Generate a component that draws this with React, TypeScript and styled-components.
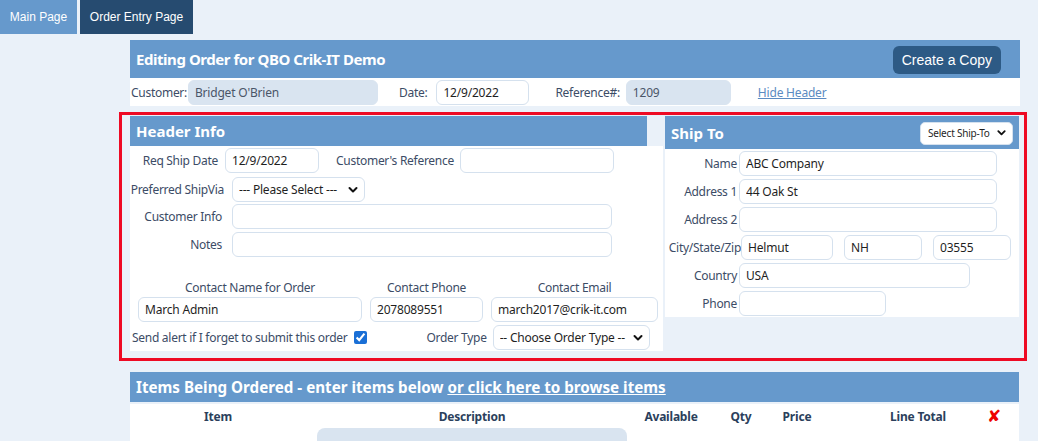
import React from 'react'
import styled, { createGlobalStyle } from 'styled-components'

const GlobalStyle = createGlobalStyle`
  html, body {
    margin: 0;
    padding: 0;
    background: #eaf1f9;
    font-family: 'Noto Sans', 'Open Sans', sans-serif;
    overflow: hidden;
  }
`

const Tabs = styled.div`
  display: flex;
  gap: 3px;
  height: 34px;
`

const Tab = styled.div<{ $active?: boolean }>`
  display: flex;
  align-items: center;
  justify-content: center;
  width: ${({ $active }) => ($active ? '113px' : '77px')};
  background: ${({ $active }) => ($active ? '#264b70' : '#6699cc')};
  color: #fff;
  font-family: 'Liberation Sans', Arial, sans-serif;
  font-size: 12px;
`

const Main = styled.div`
  margin: 6px 0 0 130px;
  width: 890px;
`

const TitleBar = styled.div`
  display: flex;
  align-items: center;
  justify-content: space-between;
  height: 38px;
  padding: 0 19px 0 6px;
  background: #6699cc;
`

const Title = styled.div`
  color: #fff;
  font-weight: 700;
  font-size: 15px;
  letter-spacing: -0.45px;
`

const CopyButton = styled.button`
  height: 28px;
  padding: 0 9px;
  border: none;
  border-radius: 6px;
  background: #2d5a85;
  color: #fff;
  font-family: 'Liberation Sans', Arial, sans-serif;
  font-size: 14px;
  margin-top: 1px;
`

const InfoRow = styled.div`
  display: flex;
  align-items: center;
  height: 28px;
  background: #fff;
  padding-left: 1px;
`

const Label = styled.span<{ $ml?: number; $mr?: number }>`
  color: #3c4c66;
  font-size: 12px;
  letter-spacing: -0.28px;
  margin-left: ${({ $ml }) => $ml ?? 0}px;
  margin-right: ${({ $mr }) => $mr ?? 0}px;
  white-space: nowrap;
`

const Field = styled.input<{ $w: number; $gray?: boolean }>`
  box-sizing: border-box;
  width: ${({ $w }) => $w}px;
  height: 25px;
  padding: 0 6px;
  border: 1px solid ${({ $gray }) => ($gray ? '#d9e4f0' : '#d5e1ee')};
  border-radius: 6px;
  background: ${({ $gray }) => ($gray ? '#d9e4f0' : '#fff')};
  color: ${({ $gray }) => ($gray ? '#4a5568' : '#1f1f1f')};
  font-family: 'Noto Sans', sans-serif;
  font-size: 12px;
  letter-spacing: -0.2px;
  outline: none;
`

const HideLink = styled.a`
  margin-left: 27px;
  color: #5b8bc2;
  font-size: 12px;
  letter-spacing: -0.2px;
  text-decoration: underline;
`

const Highlight = styled.div`
  display: flex;
  gap: 2px;
  margin: 6px -7px 0 -11px;
  padding: 1px 5px 7px 8px;
  border: 3px solid #ee0a24;
`

const HeaderInfo = styled.div`
  width: 533px;
  display: flex;
  flex-direction: column;
`

const SectionBar = styled.div<{ $w?: number; $h: number }>`
  display: flex;
  align-items: center;
  justify-content: space-between;
  box-sizing: border-box;
  width: ${({ $w }) => ($w ? `${$w}px` : 'auto')};
  height: ${({ $h }) => $h}px;
  padding: 0 6px;
  background: #6699cc;
  color: #fff;
  font-weight: 700;
  font-size: 15px;
`

const Body = styled.div`
  display: flex;
  flex-direction: column;
  background: #fff;
`

const FormRow = styled.div<{ $mt?: number }>`
  display: flex;
  align-items: center;
  margin-top: ${({ $mt }) => $mt ?? 3}px;
`

const RowLabel = styled(Label)<{ $w: number }>`
  box-sizing: border-box;
  width: ${({ $w }) => $w}px;
  text-align: right;
  flex-shrink: 0;
`

const Contacts = styled.div`
  display: flex;
  gap: 8px;
  padding-left: 8px;
  margin-top: 22px;
`

const ContactCol = styled.div`
  display: flex;
  flex-direction: column;
  align-items: center;
  gap: 1px;
`

const SelectWrap = styled.div<{ $w: number; $h?: number }>`
  position: relative;
  width: ${({ $w }) => $w}px;
  height: ${({ $h }) => $h ?? 25}px;
  flex-shrink: 0;
`

const NativeSelect = styled.select<{ $small?: boolean }>`
  appearance: none;
  box-sizing: border-box;
  width: 100%;
  height: 100%;
  padding: 0 0 0 ${({ $small }) => ($small ? 7 : 6)}px;
  border: 1px solid #d5e1ee;
  border-radius: ${({ $small }) => ($small ? 5 : 6)}px;
  background: #fff;
  color: #1f1f1f;
  font-family: 'Noto Sans', sans-serif;
  font-size: ${({ $small }) => ($small ? 10 : 12)}px;
  letter-spacing: -0.2px;
  outline: none;
`

const Chevron = styled.svg`
  position: absolute;
  right: 6px;
  top: 50%;
  transform: translateY(-50%);
  pointer-events: none;
`

const Check = styled.input`
  width: 13px;
  height: 13px;
  margin: 0 0 0 7px;
  accent-color: #1a6fd6;
`

const ShipTo = styled.div`
  width: 354px;
  display: flex;
  flex-direction: column;
  align-self: flex-start;
`

const ShipBody = styled(Body)`
  padding-bottom: 1px;
`

const Items = styled.div`
  margin-top: 11px;
  width: 889px;
`

const ItemsBar = styled(SectionBar)`
  font-size: 15.2px;
`

const BrowseLink = styled.span`
  text-decoration: underline;
`

const ItemsBody = styled.div`
  background: #fff;
  margin-top: 2px;
  height: 40px;
`

const ColHeads = styled.div`
  display: grid;
  grid-template-columns: 176px 332px 66px 74px 38px 164px 28px;
  align-items: center;
  height: 24px;
`

const ColHead = styled.div<{ $pl?: number }>`
  text-align: center;
  padding-left: ${({ $pl }) => $pl ?? 0}px;
  color: #2b3f5c;
  font-weight: 700;
  font-size: 12px;
  letter-spacing: -0.2px;
`

const RemoveAll = styled.div`
  text-align: center;
  color: #ee0000;
  font-family: 'DejaVu Sans', sans-serif;
  font-size: 17px;
  font-weight: 700;
  line-height: 1;
`

const DescBox = styled.div`
  margin-left: 187px;
  width: 310px;
  height: 30px;
  border-radius: 8px;
  background: #d9e4f0;
`

function Select({ w, h, small, text }: { w: number; h?: number; small?: boolean; text: string }) {
  return (
    <SelectWrap $w={w} $h={h}>
      <NativeSelect $small={small} defaultValue={text}>
        <option>{text}</option>
      </NativeSelect>
      <Chevron width={small ? 11 : 12} height={small ? 11 : 12} viewBox="0 0 24 24" fill="none" stroke="#111" strokeWidth={4} strokeLinecap="round" strokeLinejoin="round">
        <path d="M5 8l7 7 7-7" />
      </Chevron>
    </SelectWrap>
  )
}

export default function App() {
  return (
    <>
      <GlobalStyle />
      <Tabs>
        <Tab>Main Page</Tab>
        <Tab $active>Order Entry Page</Tab>
      </Tabs>
      <Main>
        <TitleBar>
          <Title>Editing Order for QBO Crik-IT Demo</Title>
          <CopyButton>Create a Copy</CopyButton>
        </TitleBar>
        <InfoRow>
          <Label $mr={1}>Customer:</Label>
          <Field $w={190} $gray readOnly value="Bridget O'Brien" />
          <Label $ml={21} $mr={9}>Date:</Label>
          <Field $w={93} readOnly value="12/9/2022" />
          <Label $ml={26} $mr={6}>Reference#:</Label>
          <Field $w={105} $gray readOnly value="1209" />
          <HideLink>Hide Header</HideLink>
        </InfoRow>

        <Highlight>
          <HeaderInfo>
            <SectionBar $w={517} $h={30}>Header Info</SectionBar>
            <Body>
              <FormRow $mt={2}>
                <RowLabel $w={88}>Req Ship Date</RowLabel>
                <Field $w={94} readOnly value="12/9/2022" style={{ marginLeft: 7 }} />
                <Label $ml={17} $mr={6}>Customer's Reference</Label>
                <Field $w={154} readOnly value="" />
              </FormRow>
              <FormRow $mt={4}>
                <RowLabel $w={94}>Preferred ShipVia</RowLabel>
                <span style={{ width: 8 }} />
                <Select w={133} text="--- Please Select ---" />
              </FormRow>
              <FormRow $mt={2}>
                <RowLabel $w={92}>Customer Info</RowLabel>
                <Field $w={380} readOnly value="" style={{ marginLeft: 10 }} />
              </FormRow>
              <FormRow $mt={3}>
                <RowLabel $w={92}>Notes</RowLabel>
                <Field $w={380} readOnly value="" style={{ marginLeft: 10 }} />
              </FormRow>
              <Contacts>
                <ContactCol>
                  <Label>Contact Name for Order</Label>
                  <Field $w={224} readOnly value="March Admin" />
                </ContactCol>
                <ContactCol>
                  <Label>Contact Phone</Label>
                  <Field $w={113} readOnly value="2078089551" />
                </ContactCol>
                <ContactCol>
                  <Label>Contact Email</Label>
                  <Field $w={167} readOnly value="march2017@crik-it.com" />
                </ContactCol>
              </Contacts>
              <FormRow $mt={3} style={{ paddingBottom: 1 }}>
                <Label $ml={2}>Send alert if I forget to submit this order</Label>
                <Check type="checkbox" checked readOnly />
                <Label $ml={59} $mr={6}>Order Type</Label>
                <Select w={157} text="-- Choose Order Type --" />
              </FormRow>
            </Body>
          </HeaderInfo>

          <ShipTo>
            <SectionBar $h={33}>
              <span>Ship To</span>
              <Select w={93} h={23} small text="Select Ship-To" />
            </SectionBar>
            <ShipBody>
              <FormRow $mt={2}>
                <RowLabel $w={74} style={{ paddingRight: 2 }}>Name</RowLabel>
                <Field $w={258} readOnly value="ABC Company" />
              </FormRow>
              <FormRow>
                <RowLabel $w={74} style={{ paddingRight: 2 }}>Address 1</RowLabel>
                <Field $w={258} readOnly value="44 Oak St" />
              </FormRow>
              <FormRow>
                <RowLabel $w={74} style={{ paddingRight: 2 }}>Address 2</RowLabel>
                <Field $w={258} readOnly value="" />
              </FormRow>
              <FormRow>
                <RowLabel $w={76} style={{ paddingRight: 0 }}>City/State/Zip</RowLabel>
                <Field $w={92} readOnly value="Helmut" />
                <Field $w={78} readOnly value="NH" style={{ marginLeft: 11 }} />
                <Field $w={78} readOnly value="03555" style={{ marginLeft: 11 }} />
              </FormRow>
              <FormRow>
                <RowLabel $w={74} style={{ paddingRight: 2 }}>Country</RowLabel>
                <Field $w={231} readOnly value="USA" />
              </FormRow>
              <FormRow>
                <RowLabel $w={74} style={{ paddingRight: 2 }}>Phone</RowLabel>
                <Field $w={147} readOnly value="" />
              </FormRow>
            </ShipBody>
          </ShipTo>
        </Highlight>

        <Items>
          <ItemsBar $h={30}>
            <span>
              Items Being Ordered - enter items below <BrowseLink>or click here to browse items</BrowseLink>
            </span>
          </ItemsBar>
          <ItemsBody>
            <ColHeads>
              <ColHead>Item</ColHead>
              <ColHead>Description</ColHead>
              <ColHead>Available</ColHead>
              <ColHead>Qty</ColHead>
              <ColHead>Price</ColHead>
              <ColHead $pl={40}>Line Total</ColHead>
              <RemoveAll>✘</RemoveAll>
            </ColHeads>
            <DescBox />
          </ItemsBody>
        </Items>
      </Main>
    </>
  )
}
